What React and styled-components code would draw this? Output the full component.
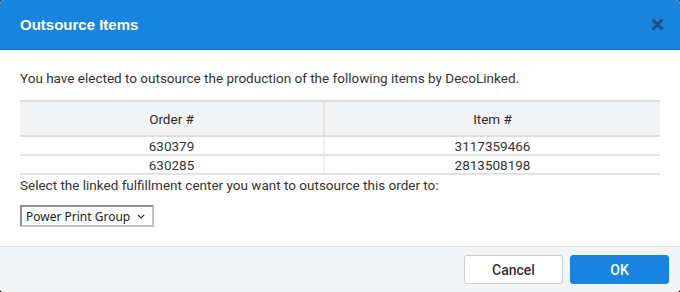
import React from "react";
import styled, { createGlobalStyle } from "styled-components";

const Global = createGlobalStyle`
  html, body { margin: 0; padding: 0; background: #3a3a3a; }
  body { font-family: Roboto, "Liberation Sans", sans-serif; }
  * { box-sizing: border-box; }
`;

const Dialog = styled.div`
  width: 680px;
  height: 292px;
  background: #fff;
  border-radius: 4px;
  overflow: hidden;
  display: flex;
  flex-direction: column;
`;

const Header = styled.div`
  height: 50px;
  flex: none;
  background: #1784e0;
  border-bottom: 1px solid #1472c4;
  display: flex;
  align-items: center;
  justify-content: space-between;
  padding: 0 16px 0 20px;
`;

const Title = styled.h1`
  margin: 0;
  font-family: "Liberation Sans", Arial, sans-serif;
  font-weight: bold;
  font-size: 15px;
  color: #fff;
`;

const Close = styled.button`
  border: 0;
  background: none;
  padding: 0;
  width: 12px;
  height: 12px;
  display: flex;
  cursor: pointer;
`;

const Body = styled.div`
  flex: 1;
  padding: 20px 20px 0 20px;
  color: #333;
  font-size: 13.5px;
`;

const Text = styled.p`
  margin: 0;
  line-height: 17px;
`;

const Table = styled.table`
  width: 640px;
  margin-top: 13px;
  border-collapse: collapse;
  table-layout: fixed;
  font-size: 13.5px;
  color: #333;
`;

const Th = styled.th`
  height: 35px;
  background: #f3f4f6;
  font-weight: normal;
  color: #2a2a2a;
  border-top: 2px solid #dcdcdc;
  border-bottom: 2px solid #dcdcdc;
  border-left: ${(p) => (p.$first ? "0" : "2px solid #e6e6e6")};
  text-align: center;
  padding: 0;
  width: ${(p) => p.$w || "auto"};
`;

const Td = styled.td`
  height: 19px;
  text-align: center;
  padding: 0;
  border-bottom: 2px solid #e2e2e2;
  border-left: ${(p) => (p.$first ? "0" : "2px solid #f0f0f0")};
  line-height: 16px;
`;

const Label = styled(Text)`
  margin-top: 2px;
`;

const Select = styled.div`
  margin-top: 11px;
  width: 134px;
  height: 22px;
  border: 2px solid #8f8f8f;
  border-right-color: #c4c4c4;
  border-bottom-color: #c4c4c4;
  display: flex;
  align-items: center;
  justify-content: space-between;
  padding: 0 7px 0 4px;
  font-family: "Noto Sans", "Open Sans", sans-serif;
  font-size: 12px;
  white-space: nowrap;
  color: #222;
  background: #fff;
`;

const Footer = styled.div`
  height: 46px;
  flex: none;
  background: #f3f4f6;
  border-top: 1px solid #dedede;
  display: flex;
  justify-content: flex-end;
  align-items: center;
  gap: 7px;
  padding: 0 11px 0 0;
`;

const Button = styled.button`
  width: 99px;
  height: 29px;
  border-radius: 3px;
  font-family: Roboto, "Liberation Sans", sans-serif;
  font-weight: 500;
  font-size: 14px;
  border: 1px solid ${(p) => (p.$primary ? "#1784e0" : "#cfcfcf")};
  background: ${(p) => (p.$primary ? "#1784e0" : "#fff")};
  color: ${(p) => (p.$primary ? "#fff" : "#333")};
  cursor: pointer;
`;

const rows = [
  ["630379", "3117359466"],
  ["630285", "2813508198"],
];

export default function App() {
  return (
    <>
      <Global />
      <Dialog>
        <Header>
          <Title>Outsource Items</Title>
          <Close aria-label="Close">
            <svg width="11" height="11" viewBox="0 0 11 11">
              <path d="M1.5 1.5 L9.5 9.5 M9.5 1.5 L1.5 9.5" stroke="#1d4f7e" strokeWidth="3" strokeLinecap="square" />
            </svg>
          </Close>
        </Header>
        <Body>
          <Text>You have elected to outsource the production of the following items by DecoLinked.</Text>
          <Table>
            <thead>
              <tr>
                <Th $first $w="304px">Order #</Th>
                <Th>Item #</Th>
              </tr>
            </thead>
            <tbody>
              {rows.map(([o, i]) => (
                <tr key={o}>
                  <Td $first>{o}</Td>
                  <Td>{i}</Td>
                </tr>
              ))}
            </tbody>
          </Table>
          <Label>Select the linked fulfillment center you want to outsource this order to:</Label>
          <Select>
            <span>Power Print Group</span>
            <svg width="8" height="5" viewBox="0 0 8 5">
              <path d="M0.8 0.8 L4 4 L7.2 0.8" fill="none" stroke="#333" strokeWidth="1.2" />
            </svg>
          </Select>
        </Body>
        <Footer>
          <Button>Cancel</Button>
          <Button $primary>OK</Button>
        </Footer>
      </Dialog>
    </>
  );
}
